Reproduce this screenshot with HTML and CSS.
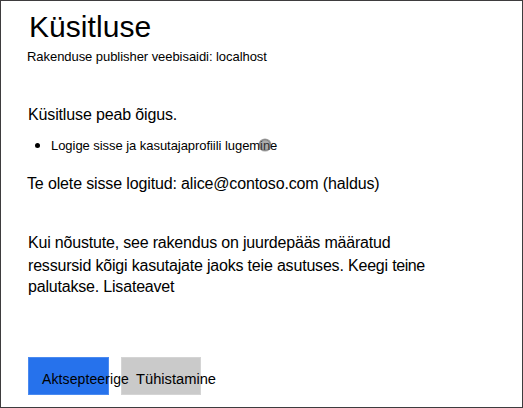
FILE: index.html
```html
<!DOCTYPE html>
<html lang="et">
<head>
<meta charset="utf-8">
<title>Küsitluse</title>
<link rel="stylesheet" href="styles.css">
</head>
<body>
<main class="consent">
  <h1 class="title">Küsitluse</h1>
  <p class="publisher">Rakenduse publisher veebisaidi: localhost</p>
  <p class="lead">Küsitluse peab õigus.</p>
  <ul class="scopes">
    <li class="scope"><span class="scope-text">Logige sisse ja kasutajaprofiili lugemine<svg class="info" viewBox="0 0 14 14"><circle cx="7" cy="7" r="5.7"/></svg></span></li>
  </ul>
  <p class="account">Te olete sisse logitud: alice@contoso.com (haldus)</p>
  <p class="terms">
    <span class="line line-a">Kui nõustute, see rakendus on juurdepääs määratud</span>
    <span class="line line-b">ressursid kõigi kasutajate jaoks teie asutuses. Keegi <span class="tight">teine</span></span>
    <span class="line line-c">palutakse. Lisateavet</span>
  </p>
  <div class="actions">
    <button class="button accept"><span>Aktsepteerige</span></button>
    <button class="button cancel"><span>Tühistamine</span></button>
  </div>
</main>
</body>
</html>
```
FILE: styles.css
```css
* { box-sizing: border-box; }
body { margin: 0; }
.consent {
  width: 523px;
  height: 408px;
  padding: 8px 27px 0;
  border: 1px solid #3e3c3e;
  background: #fff;
  color: #000;
  font-family: "Liberation Sans", Arial, sans-serif;
  font-size: 16px;
  line-height: 22px;
  white-space: nowrap;
  overflow: hidden;
}
h1, p, ul { margin: 0; padding: 0; font-weight: 400; }
.title { padding-left: 1px; font-size: 30px; line-height: 36px; letter-spacing: .05px; }
.publisher { margin: 2px 0 0 -1px; font-size: 13px; line-height: 20px; letter-spacing: -.055px; }
.lead { margin-top: 37px; letter-spacing: -.14px; }
.scopes { margin-top: 10px; font-size: 13px; line-height: 20px; letter-spacing: -.05px; list-style: none; }
.scope { display: flex; align-items: center; padding-left: 8px; }
.scope::before { content: ""; width: 5px; height: 5px; margin: -2px 10px 0 -1px; border-radius: 50%; background: #000; }
.scope-text { position: relative; left: 1px; }
.info { position: absolute; left: 207px; top: 2px; width: 14px; height: 14px; fill: rgba(90, 90, 90, .5); stroke: rgba(90, 90, 90, .55); stroke-width: 1.8; }
.account { margin: 17px 0 0 -1px; letter-spacing: -.14px; }
.terms { margin-top: 37px; letter-spacing: -.19px; }
.line { display: block; }
.line-a { margin-bottom: 1px; }
.line-c { margin-top: -1px; }
.tight { letter-spacing: -.4px; }
.actions { display: flex; gap: 12px; margin-top: 59px; }
.button {
  display: flex;
  align-items: center;
  height: 38px;
  padding: 6px 0 0;
  border: 1px solid;
  color: #000;
  font: 14px/20px "Liberation Sans", Arial, sans-serif;
}
.accept { position: relative; z-index: 1; width: 81px; padding-left: 13px; border-color: #4a8af0; background: #2672ec; letter-spacing: .1px; }
.cancel { width: 80px; padding-left: 14px; border-color: #d4d4d4; background: #cacaca; font-size: 14.7px; }
```
